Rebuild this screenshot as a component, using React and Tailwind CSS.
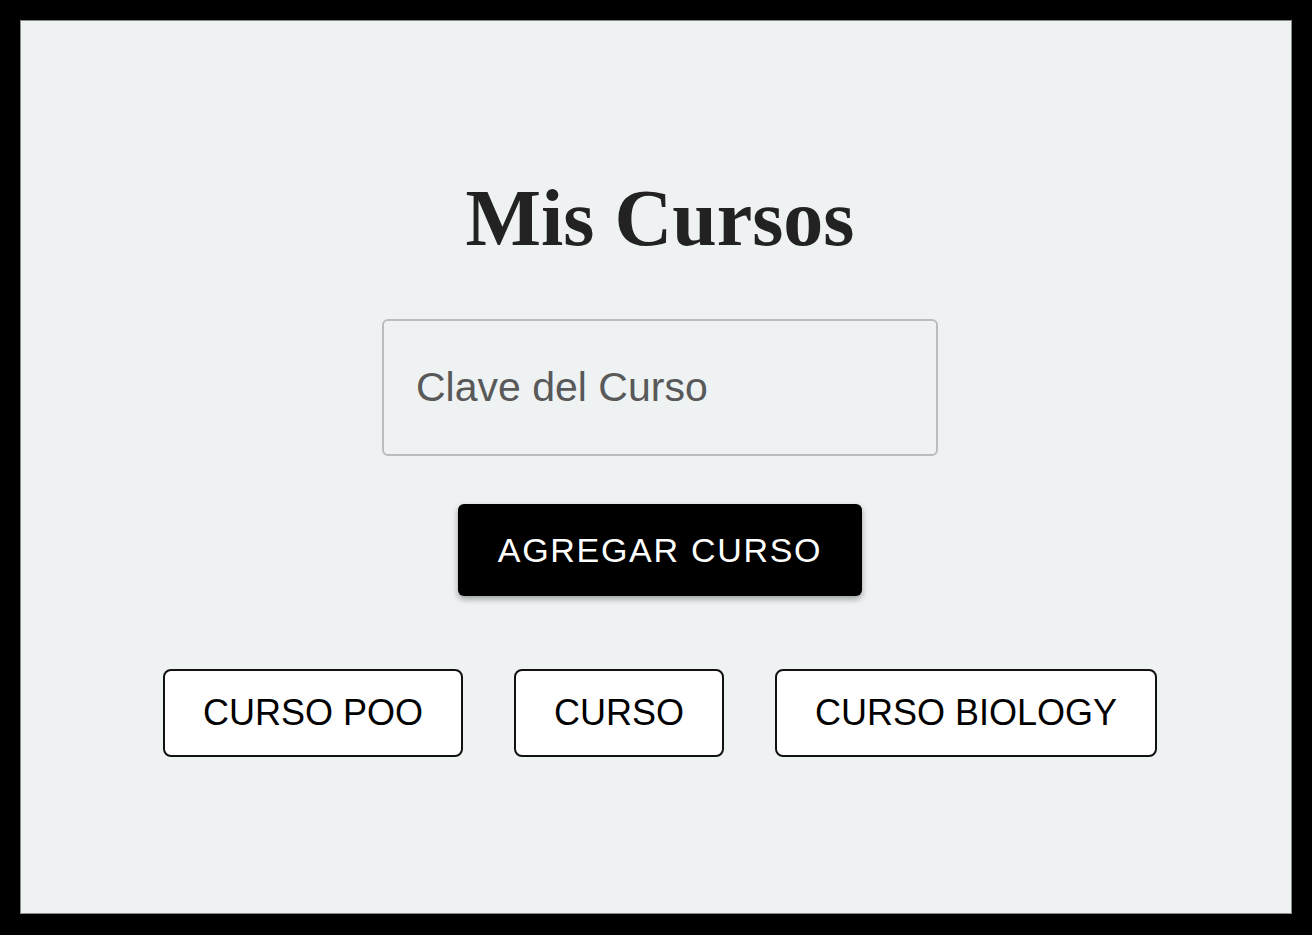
import React, { useState } from 'react';

const courses = ['CURSO POO', 'CURSO', 'CURSO BIOLOGY'];

export default function App() {
  const [clave, setClave] = useState('');

  return (
    <div className="h-screen bg-black p-[20px] pb-[21px] flex">
      {/* Panel */}
      <div className="flex-1 bg-[#eef2f3] border border-[#8a8a8a] flex flex-col items-center pt-[153px] pl-[8px]">
        <h1 className="font-['Liberation_Serif',serif] font-bold text-[80px] leading-[89px] text-[#222222]">
          Mis Cursos
        </h1>

        {/* Clave input */}
        <input
          value={clave}
          onChange={(e) => setClave(e.target.value)}
          placeholder="Clave del Curso"
          className="mt-[56px] w-[556px] h-[137px] rounded-[6px] border-2 border-[#b9bdbe] bg-transparent pl-[32px] font-['Liberation_Sans',Arial,sans-serif] text-[41px] text-[#333] placeholder:text-[#595959] outline-none"
        />

        <button className="mt-[48px] w-[404px] h-[92px] rounded-[6px] bg-black text-white font-['Liberation_Sans',Arial,sans-serif] text-[34px] tracking-[1.7px] shadow-[0_3px_6px_rgba(0,0,0,0.35)]">
          AGREGAR CURSO
        </button>

        {/* Course list */}
        <div className="mt-[73px] flex gap-[51px]">
          {courses.map((c) => (
            <button
              key={c}
              className="h-[88px] px-[38px] rounded-[8px] border-2 border-[#111] bg-white text-black font-['Liberation_Sans',Arial,sans-serif] text-[36px]"
            >
              {c}
            </button>
          ))}
        </div>
      </div>
    </div>
  );
}
